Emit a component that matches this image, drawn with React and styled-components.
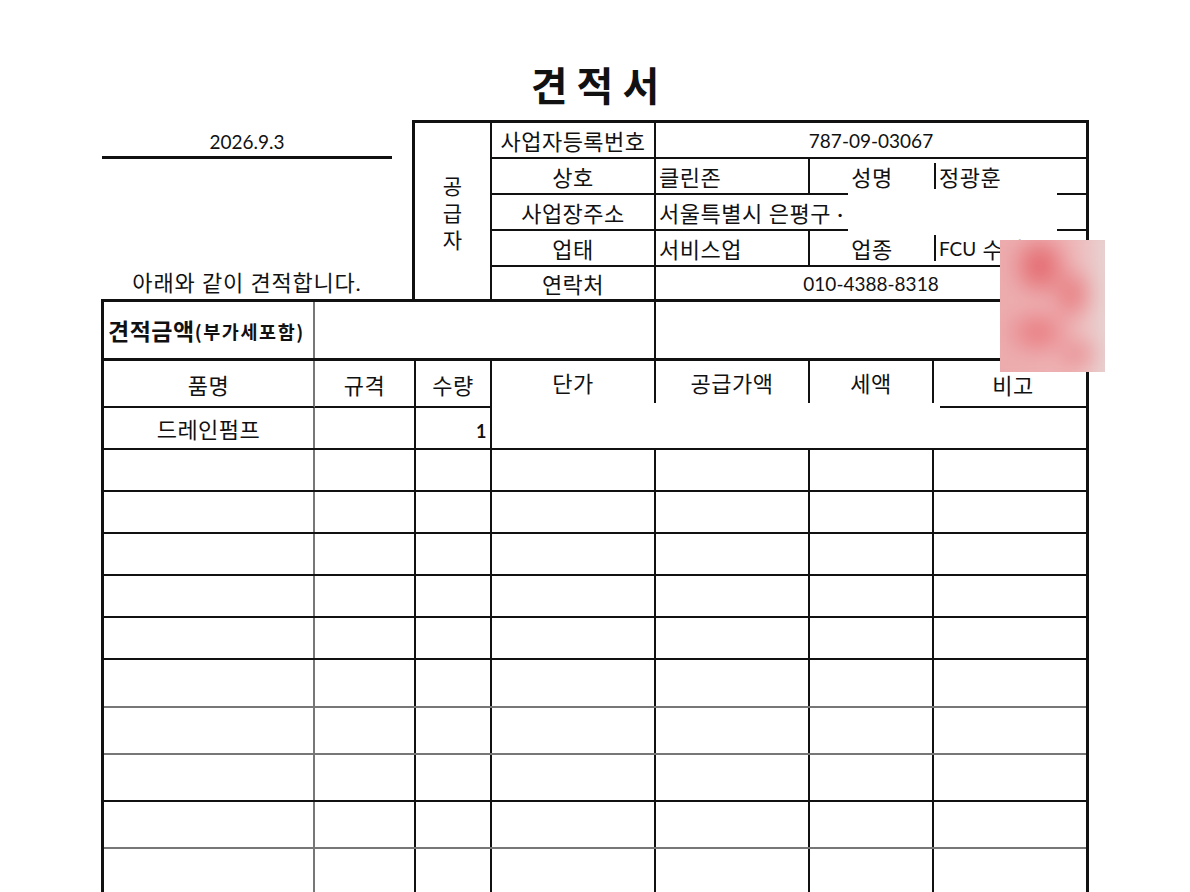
import React from "react";
import styled, { createGlobalStyle } from "styled-components";

const LINE = "#111";
const SOFT = "#777";

const Global = createGlobalStyle`
  html, body { margin: 0; padding: 0; background: #fff; }
  body {
    font-family: Lato, "Noto Sans CJK KR", sans-serif;
    color: #111;
  }
  * { box-sizing: border-box; }
`;

const Page = styled.div`
  position: relative;
  width: 1190px;
  height: 892px;
  overflow: hidden;
  background: #fff;
`;

const Sheet = styled.div`
  margin-left: 101px;
  width: 988px;
`;

const Title = styled.h1`
  margin: 0;
  height: 120px;
  padding-top: 61px;
  text-align: center;
  font-family: "Noto Sans CJK KR", sans-serif;
  font-weight: 700;
  font-size: 40px;
  line-height: 46px;
  color: #111;
`;

const TopSection = styled.div`
  display: flex;
  height: 179px;
`;

const LeftBlock = styled.div`
  width: 311px;
  display: flex;
  flex-direction: column;
  padding-left: 1px;
`;

const DateLine = styled.div`
  width: 290px;
  margin-top: 8px;
  height: 31px;
  border-bottom: 3px solid ${LINE};
  text-align: center;
  font-size: 19px;
  line-height: 28px;
`;

const Greeting = styled.div`
  margin-top: auto;
  width: 290px;
  text-align: center;
  font-size: 22px;
  letter-spacing: 0.8px;
  line-height: 30px;
  margin-bottom: 1px;
`;

const SupplierBox = styled.div`
  width: 677px;
  border: 3px solid ${LINE};
  border-bottom: none;
  display: grid;
  grid-template-columns: 77px 164px 154px 124px 152px;
  grid-template-rows: 36px 36px 36px 36px 32px;
`;

const SideHeading = styled.div`
  grid-row: 1 / span 5;
  border-right: 2px solid ${LINE};
  display: flex;
  flex-direction: column;
  align-items: center;
  justify-content: center;
  font-size: 21px;
  line-height: 27px;
  padding-top: 2px;
`;

const SCell = styled.div`
  grid-column: ${(p) => (p.$span ? `span ${p.$span}` : "auto")};
  border-right: ${(p) => (p.$right ? `2px solid ${LINE}` : "none")};
  border-bottom: ${(p) => (p.$bottom ? `2px solid ${LINE}` : "none")};
  display: flex;
  align-items: center;
  justify-content: ${(p) =>
    p.$align === "left" ? "flex-start" : p.$align === "right" ? "flex-end" : "center"};
  padding: 0 3px;
  font-size: ${(p) => (p.$num ? "19px" : "22px")};
  letter-spacing: ${(p) => (p.$num ? "0" : "0.5px")};
  white-space: nowrap;
  overflow: hidden;
`;

const BarValue = styled.span`
  display: inline-flex;
  align-items: center;
  height: 26px;
  margin-left: -3px;
  padding-left: 3px;
  border-left: 2px solid ${LINE};
`;

const Latin = styled.span`
  font-size: 19px;
  letter-spacing: 0;
`;

const MainTable = styled.div`
  border: 3px solid ${LINE};
  border-bottom: none;
`;

const Row = styled.div`
  display: grid;
  grid-template-columns: ${(p) => p.$cols || "211px 101px 76px 164px 154px 124px 152px"};
  height: ${(p) => p.$h}px;
  border-bottom: ${(p) =>
    p.$line ? `${p.$line}px solid ${p.$soft ? SOFT : LINE}` : "none"};
`;

const Cell = styled.div`
  display: flex;
  align-items: center;
  justify-content: ${(p) =>
    p.$align === "left" ? "flex-start" : p.$align === "right" ? "flex-end" : "center"};
  padding: 0 4px;
  font-size: 22px;
  letter-spacing: 0.5px;
  white-space: nowrap;
  border-right: ${(p) =>
    p.$right === "soft" ? `2px solid ${SOFT}` : p.$right ? `2px solid ${LINE}` : "none"};
  border-bottom: ${(p) => (p.$bottom ? `2px solid ${LINE}` : "none")};
  margin-bottom: ${(p) => (p.$short ? "5px" : "0")};
  margin-left: ${(p) => (p.$inset ? "6px" : "0")};
`;

const AmountLabel = styled.span`
  font-weight: 700;
  font-size: 23px;
  letter-spacing: 0.5px;
  font-family: "Noto Sans CJK KR", sans-serif;
`;

const AmountNote = styled.span`
  font-weight: 700;
  font-size: 18.5px;
  letter-spacing: 1.6px;
  font-family: "Noto Sans CJK KR", sans-serif;
  padding-top: 2px;
`;

const Qty = styled.span`
  font-size: 18px;
  font-weight: 700;
  padding-top: 6px;
  margin-right: -1px;
`;

const Redaction = styled.div`
  position: absolute;
  left: 848px;
  top: 189px;
  width: 209px;
  height: 46px;
  background: #fff;
`;

const Stamp = styled.div`
  position: absolute;
  left: 1000px;
  top: 240px;
  width: 105px;
  height: 132px;
  overflow: hidden;
  background: #eab8b9;
`;

const StampBlur = styled.div`
  position: absolute;
  inset: -12px;
  filter: blur(8px);
  background:
    radial-gradient(ellipse 32px 36px at 52px 38px, rgba(226, 92, 98, 0.95), rgba(226, 92, 98, 0) 100%),
    radial-gradient(ellipse 26px 32px at 84px 66px, rgba(230, 112, 116, 0.85), rgba(230, 112, 116, 0) 100%),
    radial-gradient(ellipse 36px 28px at 50px 104px, rgba(232, 108, 114, 0.8), rgba(232, 108, 114, 0) 100%),
    radial-gradient(ellipse 26px 22px at 90px 126px, rgba(232, 124, 128, 0.65), rgba(232, 124, 128, 0) 100%),
    linear-gradient(to right, #eba9ab 0%, #eeb2b4 62%, #ebcaca 84%, #e2dbdb 100%);
`;

const dataRows = [
  { h: 42, line: 2 },
  { h: 42, line: 2 },
  { h: 42, line: 2 },
  { h: 42, line: 2 },
  { h: 42, line: 2 },
  { h: 48, line: 2, soft: true },
  { h: 47, line: 2, soft: true },
  { h: 47, line: 2 },
  { h: 47, line: 2, soft: true },
  { h: 47, line: 2 },
];

export default function App() {
  return (
    <Page>
      <Global />
      <Sheet>
        <Title>견 적 서</Title>
        <TopSection>
          <LeftBlock>
            <DateLine>2026.9.3</DateLine>
            <Greeting>아래와 같이 견적합니다.</Greeting>
          </LeftBlock>
          <SupplierBox>
            <SideHeading>
              <span>공</span>
              <span>급</span>
              <span>자</span>
            </SideHeading>

            <SCell $right $bottom>사업자등록번호</SCell>
            <SCell $span={3} $bottom $num>787-09-03067</SCell>

            <SCell $right $bottom>상호</SCell>
            <SCell $right $bottom $align="left">클린존</SCell>
            <SCell $bottom>성명</SCell>
            <SCell $bottom $align="left">
              <BarValue>정광훈</BarValue>
            </SCell>

            <SCell $right $bottom>사업장주소</SCell>
            <SCell $span={3} $bottom $align="left">서울특별시 은평구 ·</SCell>

            <SCell $right $bottom>업태</SCell>
            <SCell $right $bottom $align="left">서비스업</SCell>
            <SCell $bottom>업종</SCell>
            <SCell $bottom $align="left">
              <BarValue>
                <Latin>FCU</Latin>&nbsp;수리
              </BarValue>
            </SCell>

            <SCell $right>연락처</SCell>
            <SCell $span={3} $num>010-4388-8318</SCell>
          </SupplierBox>
        </TopSection>

        <MainTable>
          <Row $h={59} $line={3} $cols="211px 341px 430px">
            <Cell $right="soft" $align="left">
              <AmountLabel>견적금액</AmountLabel>
              <AmountNote>(부가세포함)</AmountNote>
            </Cell>
            <Cell $right />
            <Cell />
          </Row>

          <Row $h={47}>
            <Cell $right="soft" $bottom>품명</Cell>
            <Cell $right $bottom>규격</Cell>
            <Cell $right $bottom>수량</Cell>
            <Cell $right $short>단가</Cell>
            <Cell $right $short>공급가액</Cell>
            <Cell $right $short>세액</Cell>
            <Cell $bottom $inset>비고</Cell>
          </Row>

          <Row $h={42} $line={2}>
            <Cell $right="soft">드레인펌프</Cell>
            <Cell $right />
            <Cell $right $align="right">
              <Qty>1</Qty>
            </Cell>
            <Cell />
            <Cell />
            <Cell />
            <Cell />
          </Row>

          {dataRows.map((r, i) => (
            <Row key={i} $h={r.h} $line={r.line} $soft={r.soft}>
              <Cell $right="soft" />
              <Cell $right />
              <Cell $right />
              <Cell $right />
              <Cell $right />
              <Cell $right />
              <Cell />
            </Row>
          ))}
        </MainTable>
      </Sheet>
      <Redaction />
      <Stamp>
        <StampBlur />
      </Stamp>
    </Page>
  );
}
